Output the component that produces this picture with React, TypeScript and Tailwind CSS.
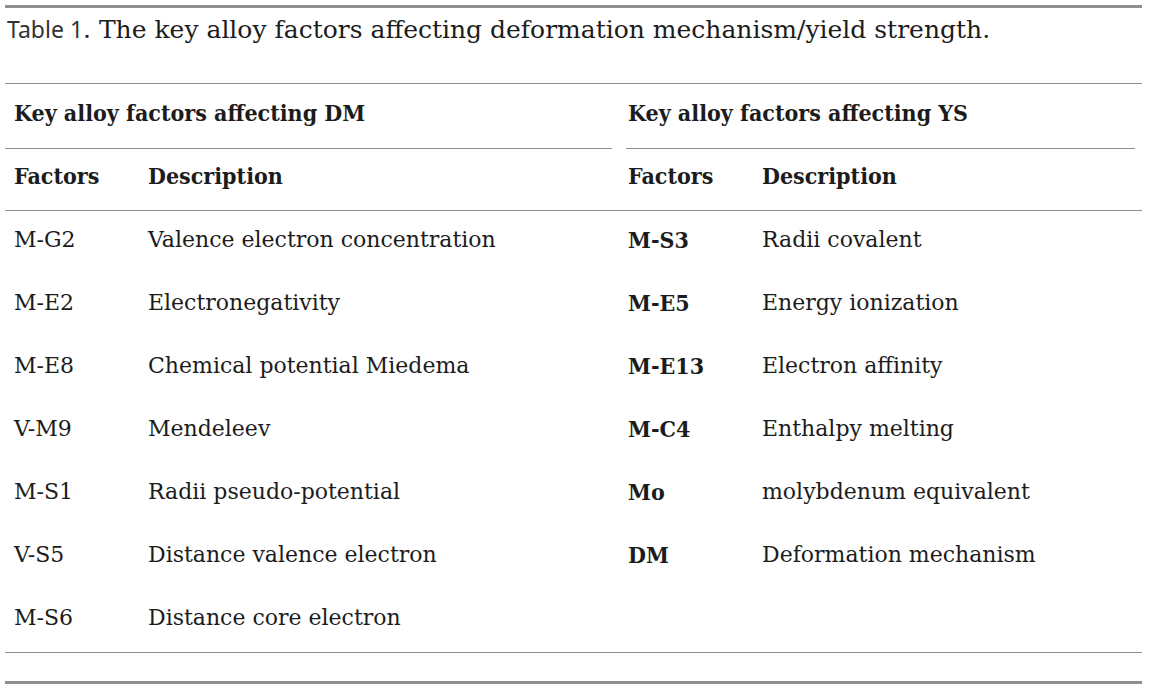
import React from "react";

const left = [
  ["M-G2", "Valence electron concentration"],
  ["M-E2", "Electronegativity"],
  ["M-E8", "Chemical potential Miedema"],
  ["V-M9", "Mendeleev"],
  ["M-S1", "Radii pseudo-potential"],
  ["V-S5", "Distance valence electron"],
  ["M-S6", "Distance core electron"],
];

const right = [
  ["M-S3", "Radii covalent"],
  ["M-E5", "Energy ionization"],
  ["M-E13", "Electron affinity"],
  ["M-C4", "Enthalpy melting"],
  ["Mo", "molybdenum equivalent"],
  ["DM", "Deformation mechanism"],
];

const serif = "font-['DejaVu_Serif','Liberation_Serif',serif]";

export default function App() {
  return (
    <div className={`min-h-[693px] bg-white px-[5px] pt-[5px] text-[#1c1c1c] ${serif}`}>
      <div className="h-[3px] w-[1137px] bg-[#8f8f8f]" />
      {/* caption */}
      <div className="h-[75px] w-[1137px] pl-[2px] pt-[5px] text-[25px] leading-[32px]">
        <span className="font-['Noto_Sans',sans-serif] text-[23px] text-[#333]">Table 1</span>. The key alloy factors
        affecting deformation mechanism/yield strength.
      </div>
      <div className="h-px w-[1137px] bg-[#8f8f8f]" />

      {/* group headers */}
      <div className="grid h-[64px] w-[1137px] grid-cols-[623px_1fr] pt-[14px] text-[23px] font-bold leading-[30px] font-stretch-condensed">
        <div className="pl-[9px]">Key alloy factors affecting DM</div>
        <div className="pl-0">Key alloy factors affecting YS</div>
      </div>
      <div className="flex w-[1137px]">
        <div className="h-px w-[607px] bg-[#8f8f8f]" />
        <div className="ml-[14px] h-px w-[509px] bg-[#8f8f8f]" />
      </div>

      {/* column headers */}
      <div className="grid h-[61px] w-[1137px] grid-cols-[134px_480px_134px_1fr] pl-[9px] pt-[12px] text-[23px] font-bold leading-[30px] font-stretch-condensed">
        <div>Factors</div>
        <div>Description</div>
        <div>Factors</div>
        <div>Description</div>
      </div>
      <div className="h-px w-[1137px] bg-[#8f8f8f]" />

      {/* body rows */}
      <div className="w-[1137px] pl-[9px]">
        {left.map((l, i) => {
          const r = right[i];
          return (
            <div
              key={l[0]}
              className="grid h-[63px] grid-cols-[134px_480px_134px_1fr] pt-[14px] text-[22px] leading-[30px]"
            >
              <div>{l[0]}</div>
              <div>{l[1]}</div>
              <div className="text-[23px] font-bold font-stretch-condensed">{r ? r[0] : ""}</div>
              <div>{r ? r[1] : ""}</div>
            </div>
          );
        })}
      </div>
      <div className="h-px w-[1137px] bg-[#8f8f8f]" />
      <div className="h-[28px]" />
      <div className="h-[3px] w-[1137px] bg-[#8f8f8f]" />
    </div>
  );
}
